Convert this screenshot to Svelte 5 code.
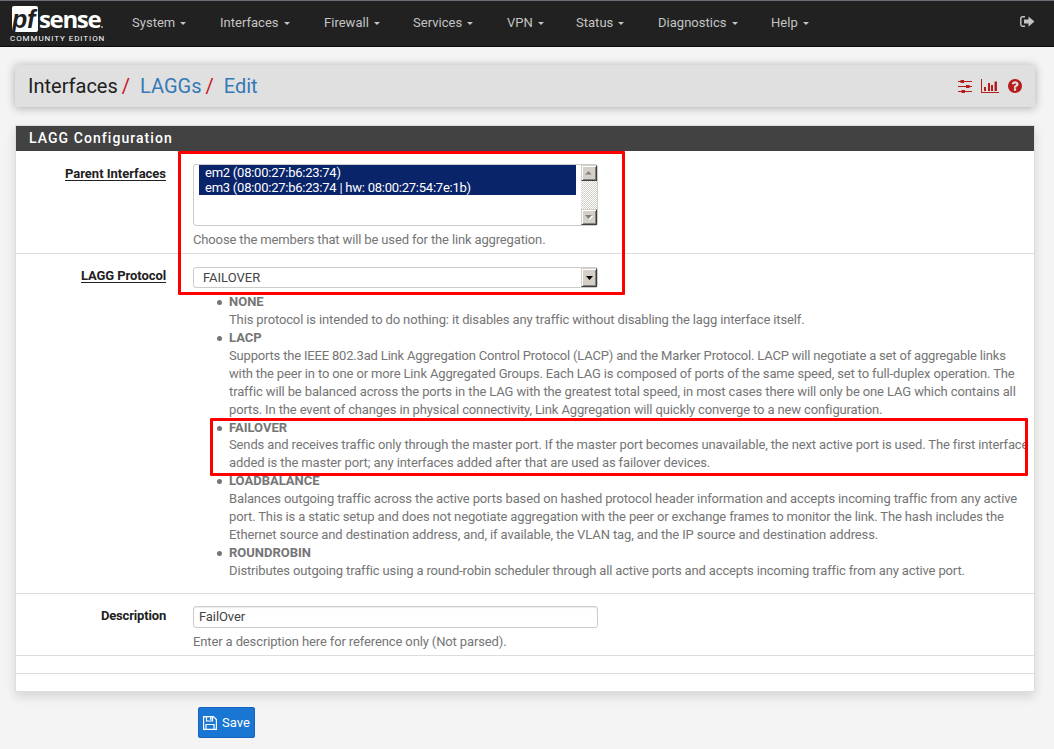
<script>
  const menu = [
    ['System', 132], ['Interfaces', 220], ['Firewall', 324], ['Services', 413],
    ['VPN', 507], ['Status', 576], ['Diagnostics', 658], ['Help', 771]
  ];
  // Each line carries its own tracking, in px.
  const protocols = [
    ['NONE', [['This protocol is intended to do nothing: it disables any traffic without disabling the lagg interface itself.', -0.135]]],
    ['LACP', [
      ['Supports the IEEE 802.3ad Link Aggregation Control Protocol (LACP) and the Marker Protocol. LACP will negotiate a set of aggregable links', -0.182],
      ['with the peer in to one or more Link Aggregated Groups. Each LAG is composed of ports of the same speed, set to full-duplex operation. The', -0.145],
      ['traffic will be balanced across the ports in the LAG with the greatest total speed, in most cases there will only be one LAG which contains all', -0.118],
      ['ports. In the event of changes in physical connectivity, Link Aggregation will quickly converge to a new configuration.', -0.134]
    ]],
    ['FAILOVER', [
      ['Sends and receives traffic only through the master port. If the master port becomes unavailable, the next active port is used. The first interface', -0.137],
      ['added is the master port; any interfaces added after that are used as failover devices.', -0.114]
    ]],
    ['LOADBALANCE', [
      ['Balances outgoing traffic across the active ports based on hashed protocol header information and accepts incoming traffic from any active', -0.137],
      ['port. This is a static setup and does not negotiate aggregation with the peer or exchange frames to monitor the link. The hash includes the', -0.14],
      ['Ethernet source and destination address, and, if available, the VLAN tag, and the IP source and destination address.', -0.115]
    ]],
    ['ROUNDROBIN', [['Distributes outgoing traffic using a round-robin scheduler through all active ports and accepts incoming traffic from any active port.', -0.148]]]
  ];
</script>

<div class="page">
  <nav>
    <div class="logo">
      <div class="brand"><span class="pf"><i>pf</i></span><span class="sense">sense</span><span class="dot"></span></div>
      <div class="edition">COMMUNITY EDITION</div>
    </div>
    <div class="menu">
      {#each menu as [name, x], i}
        <a style="width:{(menu[i + 1]?.[1] ?? 860) - x}px">{name}<b class="caret"></b></a>
      {/each}
    </div>
    <svg class="signout" width="15" height="12" viewBox="0 0 15 12">
      <path d="M5 .8H2.500Q.8.8.8 2.500v6q0 1.700 1.700 1.700H5" fill="none" stroke="#c4c4c4" stroke-width="1.400" />
      <path d="M4 3.500h4.500V.5L14.400 5.500 8.500 10.800V7.600H4z" fill="#c4c4c4" />
    </svg>
  </nav>

  <header>
    <h1><span>Interfaces</span><em>/</em><a>LAGGs</a><em>/</em><a>Edit</a></h1>
    <div class="tools">
      <svg width="14" height="14" viewBox="0 0 14 14" fill="#b71c1c">
        <path d="M0 2h14v1H0zM0 7h14v1H0zM0 12h14v1H0z" />
        <path d="M2.500 1h3.500v3H2.500zM8 6h3.500v3H8zM3.500 11H7v3H3.500z" />
      </svg>
      <svg width="18" height="14" viewBox="0 0 18 14" fill="#b71c1c">
        <path d="M0 0h1v13h17v1H0zM3 8h2v4H3zM7 4h2v8H7zM10 6h2v6h-2zM13.500 2.500h2.500v9.500h-2.500z" />
      </svg>
      <svg width="14" height="14" viewBox="128 128 1536 1536" fill="#b71c1c">
        <path d="M1024 1376v-192q0-14-9-23t-23-9h-192q-14 0-23 9t-9 23v192q0 14 9 23t23 9h192q14 0 23-9t9-23zm256-672q0-88-55.5-163t-138.5-116-170-41q-243 0-371 213-15 24 8 42l132 100q7 6 19 6 16 0 25-12 53-68 86-92 34-24 86-24 48 0 85.5 26t37.5 59q0 38-20 61t-68 45q-63 28-115.5 86.5t-52.5 125.5v36q0 14 9 23t23 9h192q14 0 23-9t9-23q0-19 21.5-49.5t54.5-49.5q32-18 49-28.5t46-35 44.5-48 28-60.5 12.5-81zm384 192q0 209-103 385.5t-279.5 279.5-385.5 103-385.5-103-279.5-279.5-103-385.5 103-385.5 279.5-279.5 385.5-103 385.5 103 279.5 279.5 103 385.5z" />
      </svg>
    </div>
  </header>

  <section class="panel">
    <h2>LAGG Configuration</h2>
    <div class="row parents">
      <div class="label"><span class="req">Parent Interfaces</span></div>
      <div class="field">
        <div class="listbox">
          <div class="options">
            <div>em2 (08:00:27:b6:23:74)</div>
            <div>em3 (08:00:27:b6:23:74 | hw: 08:00:27:54:7e:1b)</div>
          </div>
          <div class="scroll">
            <div class="btn"><svg width="8" height="4" viewBox="0 0 8 4"><path d="M0 4 3.500 0 7 4z" fill="#808080" /><path d="M1 4h7" stroke="#fff" stroke-width=".6" /></svg></div>
            <div class="btn"><svg width="8" height="5" viewBox="0 0 8 5"><path d="M1 1h7L4.500 5z" fill="#fff" /><path d="M0 0h7L3.500 4z" fill="#808080" /></svg></div>
          </div>
        </div>
        <p class="help choose">Choose the members that will be used for the link aggregation.</p>
      </div>
    </div>
    <div class="row protocol">
      <div class="label"><span class="req">LAGG Protocol</span></div>
      <div class="field">
        <div class="select"><span>FAILOVER</span>
          <div class="btn"><svg width="7" height="4" viewBox="0 0 7 4"><path d="M0 0h7L3.500 4z" fill="#000" /></svg></div>
        </div>
        <ul>
          {#each protocols as [name, lines]}
            <li><strong>{name}</strong>
              {#each lines as [line, tracking]}<div class="line" style="letter-spacing:{tracking}px">{line}</div>{/each}
            </li>
          {/each}
        </ul>
      </div>
    </div>
    <div class="row description">
      <div class="label"><span>Description</span></div>
      <div class="field">
        <div class="input">FailOver</div>
        <p class="help enter">Enter a description here for reference only (Not parsed).</p>
      </div>
    </div>
    <div class="row empty"></div>
    <div class="row empty last"></div>
  </section>

  <button>
    <svg width="14" height="14" viewBox="0 0 14 14" fill="none" stroke="#fff" stroke-width="1.200">
      <path d="M.6.600h9.800l3 3v9.800H.6zM3 13V8.500h8V13M3.500 1v4h6V1" />
      <path d="M7 1.300h1.500v2.500H7z" fill="#fff" stroke="none" />
    </svg>
    Save
  </button>

  <div class="mark top"></div>
  <div class="mark mid"></div>
</div>

<style>
  :global(body) { background: #f4f4f4; }
  .page {
    position: relative; width: 1054px; height: 749px; overflow: hidden;
    box-sizing: border-box; font-family: Roboto, sans-serif; font-size: 13px;
    line-height: 18px; color: #212121; background: #f4f4f4;
  }
  .page * { box-sizing: border-box; }
  nav {
    display: flex; height: 47px; background: #212121;
    border-top: 1px solid #6c6f75; border-bottom: 1px solid #080808;
  }
  .logo { width: 132px; padding: 5px 0 0 12px; color: #fff; }
  .brand { display: flex; height: 26px; }
  .pf {
    width: 26px; height: 26px; background: #fff; color: #212121; border-radius: 2px;
    font: italic bold 25px/26px "Liberation Sans", sans-serif; letter-spacing: -.3px; white-space: nowrap;
  }
  .pf i { display: block; }
  .sense {
    height: 26px; font: bold 24px/25px "Open Sans", sans-serif; letter-spacing: -1.350px; margin-left: 1px;
  }
  .dot { width: 2px; height: 2px; margin-top: 20px; margin-left: 1px; background: #aaa; border-radius: 50%; }
  .edition { margin: 1px 0 0 -2px; font-size: 8px; line-height: 11px; letter-spacing: .94px; white-space: nowrap; }
  .menu { display: flex; width: 728px; padding-top: 12px; color: #c4c4c4; letter-spacing: .02px; }
  .menu a { white-space: nowrap; line-height: 20px; }
  .caret {
    display: inline-block; margin-left: 5px; vertical-align: middle;
    border: 3px solid transparent; border-top-color: #c4c4c4; border-bottom: 0;
  }
  .signout { margin: 15px 0 0 160px; }
  header {
    display: flex; justify-content: space-between; margin: 18px 19px 0 15px; height: 42px;
    padding: 0 13px 0 13px; background: #e0e0e0; border-radius: 2px;
    box-shadow: 0 1px 10px rgba(0, 0, 0, .3);
  }
  h1 { margin: 0; font-size: 20px; font-weight: 400; line-height: 42px; letter-spacing: 0; white-space: nowrap; }
  h1 em { color: #c9141e; font-style: normal; margin: 0 10px 0 4px; }
  h1 a { color: #337ab7; }
  .tools { display: flex; padding-top: 14px; gap: 9px; }
  .panel {
    margin: 18px 19px 0 15px; height: 567px; background: #fff; border: 1px solid #ddd;
    box-shadow: 0 5px 10px rgba(0, 0, 0, .12);
  }
  h2 {
    margin: 0; height: 25px; padding-left: 13px; color: #fff; background: #424242;
    font-size: 14px; font-weight: 500; line-height: 25px; letter-spacing: 1.060px;
  }
  .row { display: flex; border-bottom: 1px solid #ddd; }
  .parents { height: 103px; padding-top: 13px; }
  .protocol { height: 340px; padding-top: 13px; }
  .description { height: 62px; padding-top: 12px; }
  .empty { height: 18px; }
  .last { border: 0; }
  .label { width: 150px; text-align: right; font-weight: 700; line-height: 15px; padding-top: 2px; letter-spacing: -.02px; }
  .protocol .label { padding-top: 1px; letter-spacing: -.08px; }
  .description .label { letter-spacing: -.17px; }
  .req { display: inline-block; height: 15px; border-bottom: 1px solid #212121; }
  .field { margin-left: 27px; width: 840px; }
  .listbox {
    display: flex; justify-content: space-between; width: 405px; height: 62px;
    padding: 0 0 0 5px; border: 1px solid #ccc; border-radius: 3px;
  }
  .options { width: 377px; line-height: 15px; color: #fff; letter-spacing: -.24px; }
  .options div { height: 15px; padding-left: 6px; background: #0a246a; }
  .scroll {
    display: flex; flex-direction: column; justify-content: space-between; width: 16px;
    background: repeating-conic-gradient(#d4d0c8 0 25%, #fff 0 50%) 0 0 / 2px 2px;
  }
  .btn {
    display: flex; align-items: center; justify-content: center; width: 16px; height: 16px;
    background: #d4d0c8; border: 1px solid #d4d0c8; border-right-color: #404040; border-bottom-color: #404040;
    box-shadow: inset 1px 1px #fff, inset -1px -1px #808080;
  }
  .help { margin: 0; color: #757575; white-space: nowrap; }
  .choose { margin-top: 5px; letter-spacing: -.143px; }
  .select, .input {
    display: flex; justify-content: space-between; width: 405px; height: 22px;
    border: 1px solid #ccc; border-radius: 3px; line-height: 20px; color: #444;
  }
  .select { height: 21px; padding-left: 9px; }
  .select .btn { height: 19px; }
  .input { padding-left: 5px; box-shadow: inset 0 1px 1px rgba(0, 0, 0, .08); letter-spacing: -.1px; }
  .enter { margin-top: 5px; letter-spacing: -.125px; }
  ul { margin: 4.850px 0 0; padding-left: 36px; color: #757575; line-height: 17.950px; list-style: none; }
  li { position: relative; }
  li::before {
    content: ''; position: absolute; left: -12px; top: 7px; width: 5px; height: 5px;
    border-radius: 50%; background: #757575;
  }
  li strong { display: block; font-weight: 700; }
  .line { white-space: nowrap; }
  button {
    display: flex; align-items: center; gap: 5px; width: 57px; height: 31px; margin: 15px 0 0 198px;
    padding: 0 4px; border: 1px solid #1565c0; border-radius: 2px; background: #1976d2;
    color: #fff; font: 13px Roboto, sans-serif;
  }
  .mark { position: absolute; border: 3px solid #f00; border-radius: 1px; }
  .top { left: 178px; top: 151px; width: 447px; height: 144px; }
  .mid { left: 210px; top: 418px; width: 818px; height: 58px; }
</style>
